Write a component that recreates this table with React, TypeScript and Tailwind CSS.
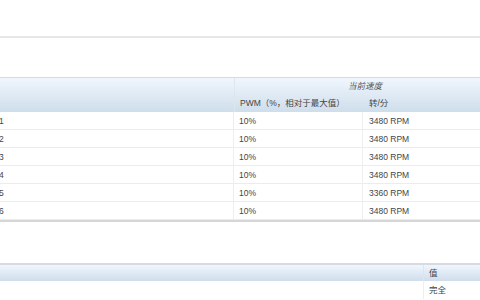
const fans = [
  { id: "1", pwm: "10%", rpm: "3480 RPM" },
  { id: "2", pwm: "10%", rpm: "3480 RPM" },
  { id: "3", pwm: "10%", rpm: "3480 RPM" },
  { id: "4", pwm: "10%", rpm: "3480 RPM" },
  { id: "5", pwm: "10%", rpm: "3360 RPM" },
  { id: "6", pwm: "10%", rpm: "3480 RPM" },
];

const font = { fontFamily: '"Liberation Sans", "Noto Sans CJK SC", sans-serif' };
const headBg = "bg-gradient-to-b from-[#f0f6fd] to-[#cfdeec]";

export default function App() {
  return (
    <div className="w-[480px] h-[300px] overflow-hidden bg-white text-[8.5px] text-[#444]" style={font}>
      <div className="h-[36px]" />
      <div className="h-[2px] bg-[#e6e6e6]" />
      <div className="h-[39px]" />

      {/* fan table */}
      <div className="w-[495px]">
        <div className={`flex h-[35px] border-t border-[#d3dbe3] ${headBg}`}>
          <div className="w-[235px] border-r border-[#dde5ed]" />
          <div className="flex-1 flex flex-col">
            <div className="h-[17px] flex items-center justify-center italic text-[#555]">当前速度</div>
            <div className="flex flex-1 items-center">
              <div className="w-[129px] pl-[5px]">PWM（%，相对于最大值）</div>
              <div className="flex-1 pl-[5px]">转/分</div>
            </div>
          </div>
        </div>
        {fans.map((f) => (
          <div key={f.id} className="flex h-[18px] items-center border-b border-[#ececec]">
            <div className="w-[235px] h-full flex items-center pt-px border-r border-[#eeeeee] -ml-[1px]">{f.id}</div>
            <div className="w-[129px] h-full flex items-center pt-px pl-[5px] border-r border-[#eeeeee]">{f.pwm}</div>
            <div className="flex-1 pt-px pl-[6px]">{f.rpm}</div>
          </div>
        ))}
        <div className="h-[2px] bg-[#d6d6d6]" />
      </div>

      <div className="h-[41px]" />

      {/* second table */}
      <div className={`flex h-[18px] border-t-2 border-[#d5dbe1] ${headBg}`}>
        <div className="w-[424px] border-r border-[#dde5ed]" />
        <div className="flex-1 flex items-center pl-[5px]">值</div>
      </div>
      <div className="flex h-[18px]">
        <div className="w-[424px] border-r border-[#eeeeee]" />
        <div className="flex-1 flex items-center pl-[5px]">完全</div>
      </div>
    </div>
  );
}
